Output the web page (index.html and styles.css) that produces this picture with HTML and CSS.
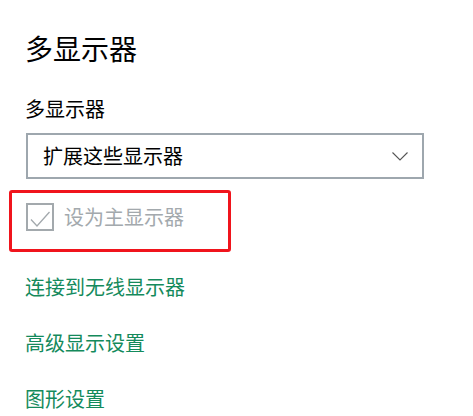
FILE: index.html
```html
<!DOCTYPE html>
<html lang="zh-CN">
<head>
    <meta charset="UTF-8">
    <meta name="viewport" content="width=device-width, initial-scale=1.0">
    <title>多显示器</title>
    <link rel="stylesheet" href="styles.css">
</head>
<body>
    <div class="page">
        <h1 class="title">多显示器</h1>
        <div class="label">多显示器</div>
        <div class="select">
            <span class="select-text">扩展这些显示器</span>
            <svg class="chevron" width="16" height="9" viewBox="0 0 16 9">
                <path d="M0.5 0.5 L8 8 L15.5 0.5" fill="none" stroke="#555" stroke-width="1.1"/>
            </svg>
        </div>
        <div class="highlight">
            <div class="check-row">
                <span class="checkbox">
                    <svg width="28" height="28" viewBox="0 0 28 28">
                        <path d="M5 16.5 L11 23 L23.5 9" fill="none" stroke="#a3a9ad" stroke-width="1.3"/>
                    </svg>
                </span>
                <span class="check-label">设为主显示器</span>
            </div>
        </div>
        <a class="link first" href="#">连接到无线显示器</a>
        <a class="link" href="#">高级显示设置</a>
        <a class="link" href="#">图形设置</a>
    </div>
</body>
</html>
```

FILE: styles.css
```css
body {
    margin: 0;
    background-color: #fff;
    font-family: "Noto Sans CJK SC", "Noto Sans", sans-serif;
    color: #000;
}
.page {
    padding: 28px 0 0 25px;
}
.title {
    margin: 0;
    font-size: 28px;
    font-weight: normal;
    line-height: 40px;
}
.label {
    margin-top: 27px;
    font-size: 20px;
    line-height: 28px;
}
.select {
    margin-top: 10px;
    margin-left: 1px;
    width: 365px;
    height: 42px;
    border: 2px solid #9ea7ae;
    display: flex;
    align-items: center;
    justify-content: space-between;
    padding: 0 14px 0 15px;
}
.select-text {
    font-size: 20px;
    line-height: 28px;
}
.chevron {
    display: block;
    margin-top: 1px;
}
.highlight {
    margin: 11px 0 0 -16px;
    width: 202px;
    border: 3px solid #f0141c;
    border-radius: 3px;
    padding: 10px 0 18px 14px;
}
.check-row {
    display: flex;
    align-items: center;
    gap: 10px;
}
.checkbox {
    width: 24px;
    height: 24px;
    border: 2px solid #a3a9ad;
    position: relative;
}
.checkbox svg {
    position: absolute;
    left: -2px;
    top: -2px;
}
.check-label {
    font-size: 20px;
    line-height: 28px;
    color: #a3a9ad;
}
.link {
    display: block;
    margin-top: 28px;
    font-size: 20px;
    line-height: 28px;
    color: #148a5c;
    text-decoration: none;
}
.link.first {
    margin-top: 21px;
}
```
